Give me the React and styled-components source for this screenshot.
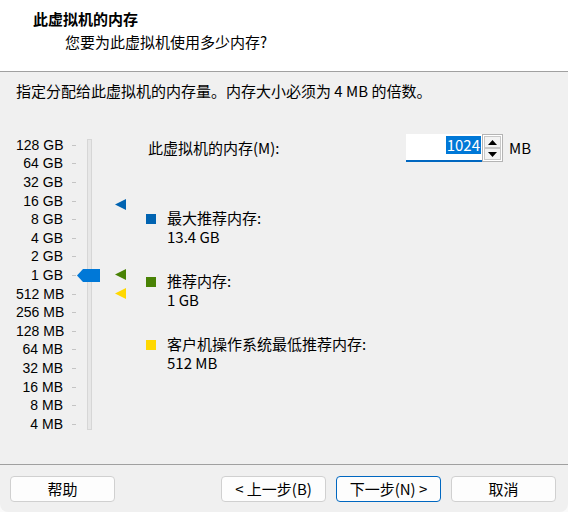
import styled, { createGlobalStyle } from "styled-components"

const GlobalStyle = createGlobalStyle`
    html, body {
        margin: 0;
        padding: 0;
        background: #fafafa;
    }
    body {
        font-family: "Noto Sans CJK SC", "Noto Sans", sans-serif;
        font-size: 15px;
        color: #000;
    }
`

const Dialog = styled.div`
    width: 568px;
    height: 512px;
    display: flex;
    flex-direction: column;
    background: #f0f0f0;
    border-radius: 0 0 8px 8px;
    overflow: hidden;
`

const Header = styled.div`
    height: 72px;
    box-sizing: border-box;
    background: #fff;
    border-bottom: 1px solid #a0a0a0;
    padding: 8px 0 0 33px;
    flex-shrink: 0;
`

const Title = styled.div`
    font-weight: 700;
    line-height: 22px;
`

const Subtitle = styled.div`
    line-height: 22px;
    margin: 1px 0 0 32px;
`

const Body = styled.div`
    flex: 1;
    padding: 9px 16px 0 16px;
`

const Description = styled.div`
    line-height: 20px;
`

const Main = styled.div`
    display: flex;
    margin-top: 33px;
`

const Slider = styled.div`
    position: relative;
    width: 130px;
    padding-top: 2px;
    flex-shrink: 0;
`

const Row = styled.div`
    display: flex;
    align-items: center;
    height: 18.6px;
`

const Label = styled.span`
    width: 47px;
    text-align: right;
    white-space: nowrap;
    font-family: "Liberation Sans", sans-serif;
    font-size: 14px;
    line-height: 17px;
`

const Tick = styled.span`
    width: 4px;
    height: 1px;
    margin-left: 9px;
    background: #c4c4c4;
`

const Track = styled.div`
    position: absolute;
    left: 71px;
    top: 5px;
    width: 3px;
    height: 289px;
    background: #e7e7e7;
    border: 1px solid #d6d6d6;
`

const Handle = styled.div`
    position: absolute;
    left: 61px;
    top: 135px;
    width: 23px;
    height: 13px;
    background: #0078d7;
    clip-path: polygon(0 50%, 6px 0, 100% 0, 100% 100%, 6px 100%);
`

const Marker = styled.div`
    position: absolute;
    left: 99px;
    top: ${p => p.$top}px;
    width: 11px;
    height: 11px;
    background: ${p => p.$color};
    clip-path: polygon(0 50%, 100% 0, 100% 100%);
`

const Pane = styled.div`
    flex: 1;
`

const MemoryRow = styled.div`
    display: grid;
    grid-template-columns: 260px max-content max-content;
    justify-content: start;
    align-items: center;
    height: 28px;
`

const MemoryLabel = styled.span`
    padding-left: 2px;
    line-height: 20px;
`

const SpinBox = styled.div`
    display: flex;
    height: 28px;
`

const Edit = styled.div`
    width: 76px;
    height: 28px;
    box-sizing: border-box;
    background: #fff;
    border-bottom: 2px solid #0067c0;
    display: flex;
    justify-content: flex-end;
    align-items: flex-start;
    padding: 2px 1px 0 0;
`

const Selected = styled.span`
    background: #0078d7;
    color: #fff;
    line-height: 18px;
    padding: 0 1px;
`

const Arrows = styled.div`
    display: flex;
    flex-direction: column;
    width: 21px;
    height: 28px;
    box-sizing: border-box;
    border: 1px solid #b4b4b4;
    background: #fff;
`

const ArrowButton = styled.div`
    flex: 1;
    display: flex;
    align-items: center;
    justify-content: center;
    background: #f3f3f3;
    border: 1px solid #c8c8c8;
    margin: ${p => (p.$down ? "0 1px 1px" : "1px 1px 0")};
`

const Unit = styled.span`
    margin-left: 6px;
    line-height: 20px;
`

const Legend = styled.div`
    display: flex;
    flex-direction: column;
    gap: 25px;
    margin-top: 46px;
`

const LegendItem = styled.div`
    display: grid;
    grid-template-columns: 21px auto;
    line-height: 19px;
`

const Swatch = styled.span`
    width: 10px;
    height: 10px;
    margin-top: 6px;
    background: ${p => p.$color};
`

const Footer = styled.div`
    flex-shrink: 0;
    display: flex;
    justify-content: space-between;
    border-top: 1px solid #a0a0a0;
    padding: 11px 12px 10px 10px;
`

const ButtonGroup = styled.div`
    display: flex;
    gap: 10px;
`

const Button = styled.button`
    width: 105px;
    height: 26px;
    box-sizing: border-box;
    font: inherit;
    line-height: 20px;
    color: #000;
    background: #fdfdfd;
    border: 1px solid ${p => (p.$primary ? "#0067c0" : "#d0d0d0")};
    border-radius: 4px;
    padding: 0;
`

const labels = [
    "128 GB", "64 GB", "32 GB", "16 GB", "8 GB", "4 GB", "2 GB", "1 GB",
    "512 MB", "256 MB", "128 MB", "64 MB", "32 MB", "16 MB", "8 MB", "4 MB",
]

const legend = [
    { color: "#0063b1", title: "最大推荐内存:", value: "13.4 GB" },
    { color: "#498205", title: "推荐内存:", value: "1 GB" },
    { color: "#ffd800", title: "客户机操作系统最低推荐内存:", value: "512 MB" },
]

const Triangle = ({ down }) => (
    <svg width="9" height="5" viewBox="0 0 9 5">
        <path d={down ? "M0 0H9L4.5 5Z" : "M0 5H9L4.5 0Z"} fill="#000" />
    </svg>
)

const App = () => {
    return (
        <Dialog>
            <GlobalStyle />
            <Header>
                <Title>此虚拟机的内存</Title>
                <Subtitle>您要为此虚拟机使用多少内存?</Subtitle>
            </Header>
            <Body>
                <Description>指定分配给此虚拟机的内存量。内存大小必须为 4 MB 的倍数。</Description>
                <Main>
                    <Slider>
                        {labels.map(l => (
                            <Row key={l}>
                                <Label>{l}</Label>
                                <Tick />
                            </Row>
                        ))}
                        <Track />
                        <Handle />
                        <Marker $top={65} $color="#0063b1" />
                        <Marker $top={135} $color="#498205" />
                        <Marker $top={154} $color="#ffd800" />
                    </Slider>
                    <Pane>
                        <MemoryRow>
                            <MemoryLabel>此虚拟机的内存(M):</MemoryLabel>
                            <SpinBox>
                                <Edit>
                                    <Selected>1024</Selected>
                                </Edit>
                                <Arrows>
                                    <ArrowButton><Triangle /></ArrowButton>
                                    <ArrowButton $down><Triangle down /></ArrowButton>
                                </Arrows>
                            </SpinBox>
                            <Unit>MB</Unit>
                        </MemoryRow>
                        <Legend>
                            {legend.map(item => (
                                <LegendItem key={item.title}>
                                    <Swatch $color={item.color} />
                                    <span>{item.title}</span>
                                    <span />
                                    <span>{item.value}</span>
                                </LegendItem>
                            ))}
                        </Legend>
                    </Pane>
                </Main>
            </Body>
            <Footer>
                <Button>帮助</Button>
                <ButtonGroup>
                    <Button>&lt; 上一步(B)</Button>
                    <Button $primary>下一步(N) &gt;</Button>
                    <Button>取消</Button>
                </ButtonGroup>
            </Footer>
        </Dialog>
    )
}

export default App
